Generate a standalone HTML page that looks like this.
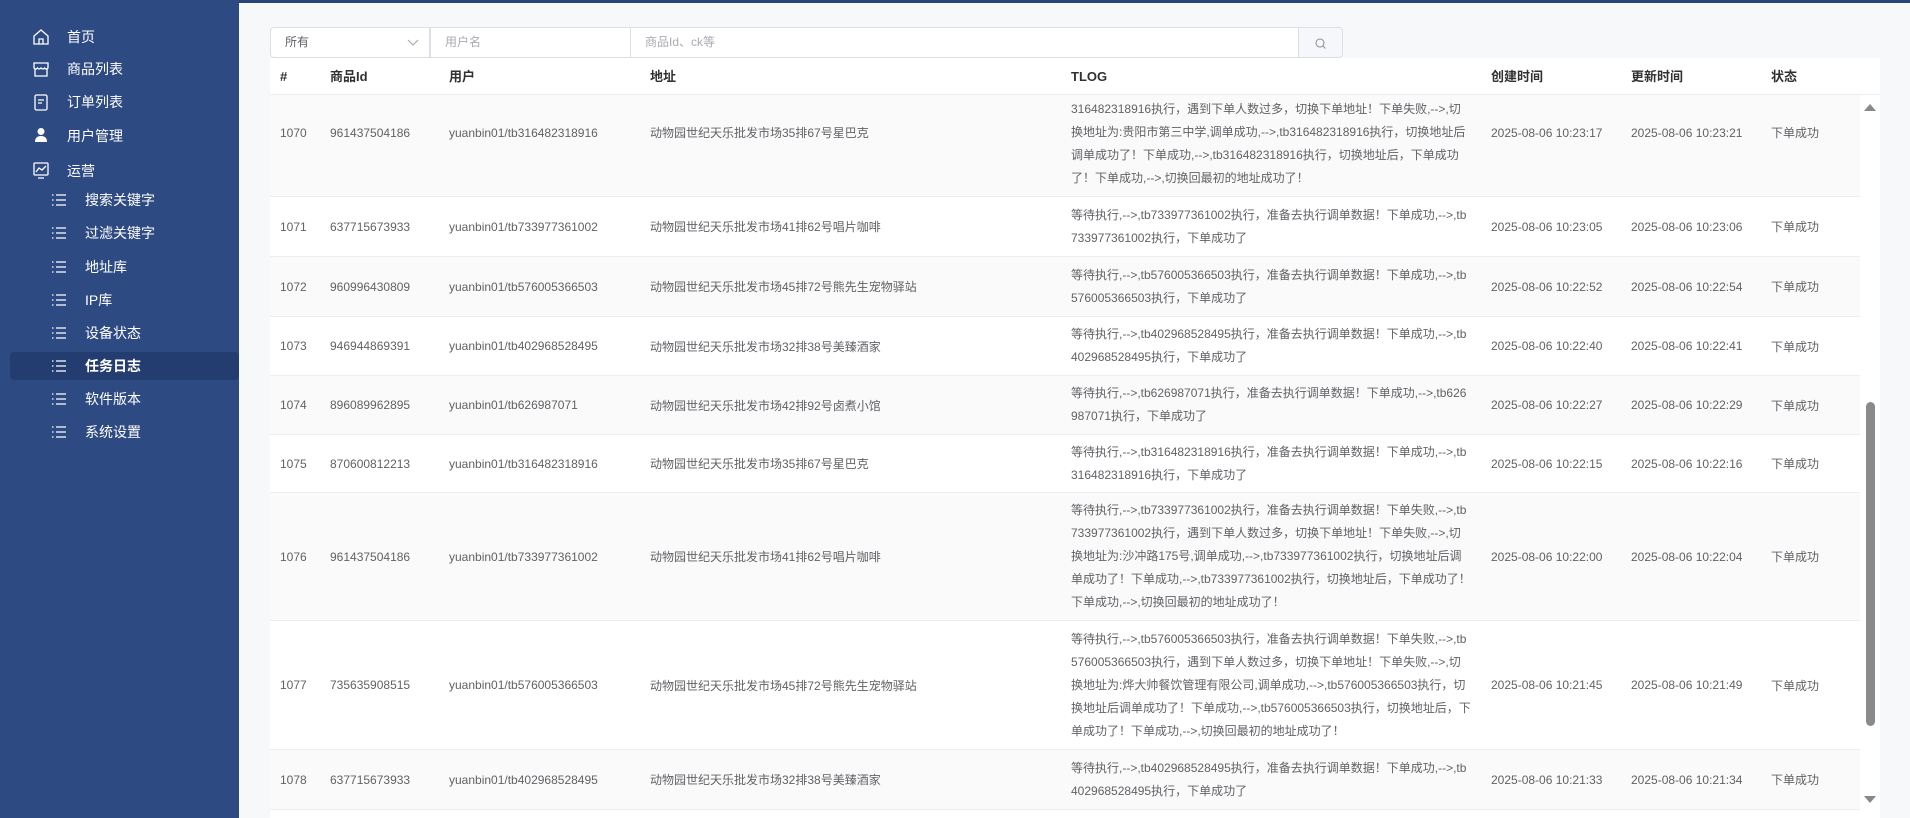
<!DOCTYPE html>
<html><head><meta charset="utf-8">
<style>
*{margin:0;padding:0;box-sizing:border-box}
body{width:1910px;height:818px;overflow:hidden;background:#f7f8fa;font-family:"Liberation Sans","Noto Sans CJK SC",sans-serif;position:relative}
.top{position:absolute;left:0;top:0;width:1910px;height:3px;background:#2b4477}
.side{position:absolute;left:0;top:0;width:239px;height:818px;background:#2d4a82;color:#fff}
.mi{position:absolute;left:67px;font-size:14px;height:20px;line-height:20px}
.ic{position:absolute;left:31px;width:20px;height:20px}
.si{position:absolute;left:85px;font-size:14px;line-height:20px}
.sic{position:absolute;left:51px;width:16px;height:16px}
.act{position:absolute;left:10px;top:352px;width:229px;height:28px;background:#243d70;border-radius:4px}
.f{position:absolute;top:27px;height:31px;background:#fff;border:1px solid #dcdfe6;font-size:12px;line-height:29px;padding-left:14px;color:#a8abb2}
.tbl{position:absolute;left:270px;top:58px;width:1610px;height:760px;overflow:hidden}
.hd{position:absolute;left:0;top:0;width:1610px;height:37px;background:#fff;border-bottom:1px solid #ebeef5}
.hd span{position:absolute;top:0;line-height:37px;font-size:13px;font-weight:bold;color:#303133}
.body{position:absolute;left:0;top:37px;width:1590px;height:723px;overflow:hidden;background:#fff}
.r{position:absolute;left:0;width:1590px;border-bottom:1px solid #ebeef5;font-size:12px;color:#606266}
.r.g{background:#fafafa}
.r .c{position:absolute;top:0;height:100%;display:flex;align-items:center;white-space:nowrap}
.r .t{position:absolute;left:801px;top:0;height:100%;display:flex;flex-direction:column;justify-content:center;line-height:23px;white-space:nowrap}
.sb{position:absolute;left:1860px;top:95px;width:20px;height:723px;background:#fff}
</style></head><body>
<div class="top"></div>
<div class="side">
 <svg class="ic" style="top:27px" viewBox="0 0 20 20" fill="none" stroke="#fff" stroke-width="1.3"><path d="M3 9 L10 3 L17 9 V17 H3 Z"/><path d="M8 17 V12 H12 V17"/></svg>
 <div class="mi" style="top:27px">首页</div>
 <svg class="ic" style="top:59px" viewBox="0 0 20 20" fill="none" stroke="#fff" stroke-width="1.3"><path d="M3 4 H17 L17 9 Q15 11 13.5 9 Q12 11 10 9 Q8 11 6.5 9 Q5 11 3 9 Z"/><path d="M4 10 V17 H16 V10"/></svg>
 <div class="mi" style="top:59px">商品列表</div>
 <svg class="ic" style="top:92px" viewBox="0 0 20 20" fill="none" stroke="#fff" stroke-width="1.3"><rect x="4" y="3" width="12" height="15" rx="1.5"/><path d="M7 8 H13 M7 11 H11"/></svg>
 <div class="mi" style="top:92px">订单列表</div>
 <svg class="ic" style="top:125px" viewBox="0 0 20 20" fill="#fff"><circle cx="10" cy="6.5" r="3.5"/><path d="M4 17 Q4 11 10 11 Q16 11 16 17 Z"/></svg>
 <div class="mi" style="top:126px">用户管理</div>
 <svg class="ic" style="top:160px" viewBox="0 0 20 20" fill="none" stroke="#fff" stroke-width="1.3"><rect x="3" y="3" width="14" height="12" rx="1"/><path d="M5 12 L8 8 L11 10 L15 6 M7 18 H13"/></svg>
 <div class="mi" style="top:161px">运营</div>
 <div class="act"></div>
 <svg class="sic" style="top:192px" viewBox="0 0 16 16" stroke="#fff" stroke-width="1.2" fill="none"><path d="M1 3H2.5M5 3H15M1 8H2.5M5 8H15M1 13H2.5M5 13H15"/></svg><div class="si" style="top:190px">搜索关键字</div>
 <svg class="sic" style="top:225px" viewBox="0 0 16 16" stroke="#fff" stroke-width="1.2" fill="none"><path d="M1 3H2.5M5 3H15M1 8H2.5M5 8H15M1 13H2.5M5 13H15"/></svg><div class="si" style="top:223px">过滤关键字</div>
 <svg class="sic" style="top:259px" viewBox="0 0 16 16" stroke="#fff" stroke-width="1.2" fill="none"><path d="M1 3H2.5M5 3H15M1 8H2.5M5 8H15M1 13H2.5M5 13H15"/></svg><div class="si" style="top:257px">地址库</div>
 <svg class="sic" style="top:292px" viewBox="0 0 16 16" stroke="#fff" stroke-width="1.2" fill="none"><path d="M1 3H2.5M5 3H15M1 8H2.5M5 8H15M1 13H2.5M5 13H15"/></svg><div class="si" style="top:290px">IP库</div>
 <svg class="sic" style="top:325px" viewBox="0 0 16 16" stroke="#fff" stroke-width="1.2" fill="none"><path d="M1 3H2.5M5 3H15M1 8H2.5M5 8H15M1 13H2.5M5 13H15"/></svg><div class="si" style="top:323px">设备状态</div>
 <svg class="sic" style="top:358px" viewBox="0 0 16 16" stroke="#fff" stroke-width="1.2" fill="none"><path d="M1 3H2.5M5 3H15M1 8H2.5M5 8H15M1 13H2.5M5 13H15"/></svg><div class="si" style="top:356px;font-weight:bold">任务日志</div>
 <svg class="sic" style="top:391px" viewBox="0 0 16 16" stroke="#fff" stroke-width="1.2" fill="none"><path d="M1 3H2.5M5 3H15M1 8H2.5M5 8H15M1 13H2.5M5 13H15"/></svg><div class="si" style="top:389px">软件版本</div>
 <svg class="sic" style="top:424px" viewBox="0 0 16 16" stroke="#fff" stroke-width="1.2" fill="none"><path d="M1 3H2.5M5 3H15M1 8H2.5M5 8H15M1 13H2.5M5 13H15"/></svg><div class="si" style="top:422px">系统设置</div>
</div>

<div class="f" style="left:270px;width:160px;color:#606266;border-radius:4px 0 0 4px">所有<svg style="position:absolute;right:10px;top:11px" width="12" height="8" viewBox="0 0 12 8" fill="none" stroke="#a8abb2" stroke-width="1.2"><path d="M1 1 L6 6 L11 1"/></svg></div>
<div class="f" style="left:430px;width:201px">用户名</div>
<div class="f" style="left:630px;width:669px">商品Id、ck等</div>
<div class="f" style="left:1298px;width:45px;background:#f5f7fa;border-radius:0 4px 4px 0;padding:0"><svg style="position:absolute;left:15px;top:9px" width="13" height="13" viewBox="0 0 13 13" fill="none" stroke="#909399" stroke-width="1.1"><circle cx="6" cy="6" r="4"/><path d="M9 9 L11.5 11.5"/></svg></div>

<div class="tbl">
 <div class="hd">
  <span style="left:10px">#</span><span style="left:60px">商品Id</span><span style="left:179px">用户</span><span style="left:380px">地址</span><span style="left:801px">TLOG</span><span style="left:1221px">创建时间</span><span style="left:1361px">更新时间</span><span style="left:1501px">状态</span>
 </div>
 <div class="body">
  <div class="r g" style="top:-26px;height:128px">
   <div class="c" style="left:10px">1070</div><div class="c" style="left:60px">961437504186</div><div class="c" style="left:179px">yuanbin01/tb316482318916</div><div class="c" style="left:380px">动物园世纪天乐批发市场35排67号星巴克</div>
   <div class="t"><div>等待执行,--&gt;,tb316482318916执行，准备去执行调单数据！下单失败,--&gt;,tb</div><div>316482318916执行，遇到下单人数过多，切换下单地址！下单失败,--&gt;,切</div><div>换地址为:贵阳市第三中学,调单成功,--&gt;,tb316482318916执行，切换地址后</div><div>调单成功了！下单成功,--&gt;,tb316482318916执行，切换地址后，下单成功</div><div>了！下单成功,--&gt;,切换回最初的地址成功了！</div></div>
   <div class="c" style="left:1221px">2025-08-06 10:23:17</div><div class="c" style="left:1361px">2025-08-06 10:23:21</div><div class="c" style="left:1501px">下单成功</div>
  </div>
  <div class="r" style="top:102px;height:60px">
   <div class="c" style="left:10px">1071</div><div class="c" style="left:60px">637715673933</div><div class="c" style="left:179px">yuanbin01/tb733977361002</div><div class="c" style="left:380px">动物园世纪天乐批发市场41排62号唱片咖啡</div>
   <div class="t"><div>等待执行,--&gt;,tb733977361002执行，准备去执行调单数据！下单成功,--&gt;,tb</div><div>733977361002执行，下单成功了</div></div>
   <div class="c" style="left:1221px">2025-08-06 10:23:05</div><div class="c" style="left:1361px">2025-08-06 10:23:06</div><div class="c" style="left:1501px">下单成功</div>
  </div>
  <div class="r g" style="top:162px;height:60px">
   <div class="c" style="left:10px">1072</div><div class="c" style="left:60px">960996430809</div><div class="c" style="left:179px">yuanbin01/tb576005366503</div><div class="c" style="left:380px">动物园世纪天乐批发市场45排72号熊先生宠物驿站</div>
   <div class="t"><div>等待执行,--&gt;,tb576005366503执行，准备去执行调单数据！下单成功,--&gt;,tb</div><div>576005366503执行，下单成功了</div></div>
   <div class="c" style="left:1221px">2025-08-06 10:22:52</div><div class="c" style="left:1361px">2025-08-06 10:22:54</div><div class="c" style="left:1501px">下单成功</div>
  </div>
  <div class="r" style="top:222px;height:59px">
   <div class="c" style="left:10px">1073</div><div class="c" style="left:60px">946944869391</div><div class="c" style="left:179px">yuanbin01/tb402968528495</div><div class="c" style="left:380px">动物园世纪天乐批发市场32排38号美臻酒家</div>
   <div class="t"><div>等待执行,--&gt;,tb402968528495执行，准备去执行调单数据！下单成功,--&gt;,tb</div><div>402968528495执行，下单成功了</div></div>
   <div class="c" style="left:1221px">2025-08-06 10:22:40</div><div class="c" style="left:1361px">2025-08-06 10:22:41</div><div class="c" style="left:1501px">下单成功</div>
  </div>
  <div class="r g" style="top:281px;height:59px">
   <div class="c" style="left:10px">1074</div><div class="c" style="left:60px">896089962895</div><div class="c" style="left:179px">yuanbin01/tb626987071</div><div class="c" style="left:380px">动物园世纪天乐批发市场42排92号卤煮小馆</div>
   <div class="t"><div>等待执行,--&gt;,tb626987071执行，准备去执行调单数据！下单成功,--&gt;,tb626</div><div>987071执行，下单成功了</div></div>
   <div class="c" style="left:1221px">2025-08-06 10:22:27</div><div class="c" style="left:1361px">2025-08-06 10:22:29</div><div class="c" style="left:1501px">下单成功</div>
  </div>
  <div class="r" style="top:340px;height:58px">
   <div class="c" style="left:10px">1075</div><div class="c" style="left:60px">870600812213</div><div class="c" style="left:179px">yuanbin01/tb316482318916</div><div class="c" style="left:380px">动物园世纪天乐批发市场35排67号星巴克</div>
   <div class="t"><div>等待执行,--&gt;,tb316482318916执行，准备去执行调单数据！下单成功,--&gt;,tb</div><div>316482318916执行，下单成功了</div></div>
   <div class="c" style="left:1221px">2025-08-06 10:22:15</div><div class="c" style="left:1361px">2025-08-06 10:22:16</div><div class="c" style="left:1501px">下单成功</div>
  </div>
  <div class="r g" style="top:398px;height:128px">
   <div class="c" style="left:10px">1076</div><div class="c" style="left:60px">961437504186</div><div class="c" style="left:179px">yuanbin01/tb733977361002</div><div class="c" style="left:380px">动物园世纪天乐批发市场41排62号唱片咖啡</div>
   <div class="t"><div>等待执行,--&gt;,tb733977361002执行，准备去执行调单数据！下单失败,--&gt;,tb</div><div>733977361002执行，遇到下单人数过多，切换下单地址！下单失败,--&gt;,切</div><div>换地址为:沙冲路175号,调单成功,--&gt;,tb733977361002执行，切换地址后调</div><div>单成功了！下单成功,--&gt;,tb733977361002执行，切换地址后，下单成功了！</div><div>下单成功,--&gt;,切换回最初的地址成功了！</div></div>
   <div class="c" style="left:1221px">2025-08-06 10:22:00</div><div class="c" style="left:1361px">2025-08-06 10:22:04</div><div class="c" style="left:1501px">下单成功</div>
  </div>
  <div class="r" style="top:526px;height:129px">
   <div class="c" style="left:10px">1077</div><div class="c" style="left:60px">735635908515</div><div class="c" style="left:179px">yuanbin01/tb576005366503</div><div class="c" style="left:380px">动物园世纪天乐批发市场45排72号熊先生宠物驿站</div>
   <div class="t"><div>等待执行,--&gt;,tb576005366503执行，准备去执行调单数据！下单失败,--&gt;,tb</div><div>576005366503执行，遇到下单人数过多，切换下单地址！下单失败,--&gt;,切</div><div>换地址为:烨大帅餐饮管理有限公司,调单成功,--&gt;,tb576005366503执行，切</div><div>换地址后调单成功了！下单成功,--&gt;,tb576005366503执行，切换地址后，下</div><div>单成功了！下单成功,--&gt;,切换回最初的地址成功了！</div></div>
   <div class="c" style="left:1221px">2025-08-06 10:21:45</div><div class="c" style="left:1361px">2025-08-06 10:21:49</div><div class="c" style="left:1501px">下单成功</div>
  </div>
  <div class="r g" style="top:655px;height:60px">
   <div class="c" style="left:10px">1078</div><div class="c" style="left:60px">637715673933</div><div class="c" style="left:179px">yuanbin01/tb402968528495</div><div class="c" style="left:380px">动物园世纪天乐批发市场32排38号美臻酒家</div>
   <div class="t"><div>等待执行,--&gt;,tb402968528495执行，准备去执行调单数据！下单成功,--&gt;,tb</div><div>402968528495执行，下单成功了</div></div>
   <div class="c" style="left:1221px">2025-08-06 10:21:33</div><div class="c" style="left:1361px">2025-08-06 10:21:34</div><div class="c" style="left:1501px">下单成功</div>
  </div>
 </div>
</div>
<div class="sb">
 <svg style="position:absolute;left:4px;top:8px" width="12" height="8" viewBox="0 0 12 8"><path d="M0 8 L6 1 L12 8 Z" fill="#888"/></svg>
 <div style="position:absolute;left:6px;top:307px;width:9px;height:324px;background:#8a8a8a;border-radius:5px"></div>
 <svg style="position:absolute;left:4px;top:701px" width="12" height="8" viewBox="0 0 12 8"><path d="M0 0 L6 7 L12 0 Z" fill="#888"/></svg>
</div>
</body></html>
